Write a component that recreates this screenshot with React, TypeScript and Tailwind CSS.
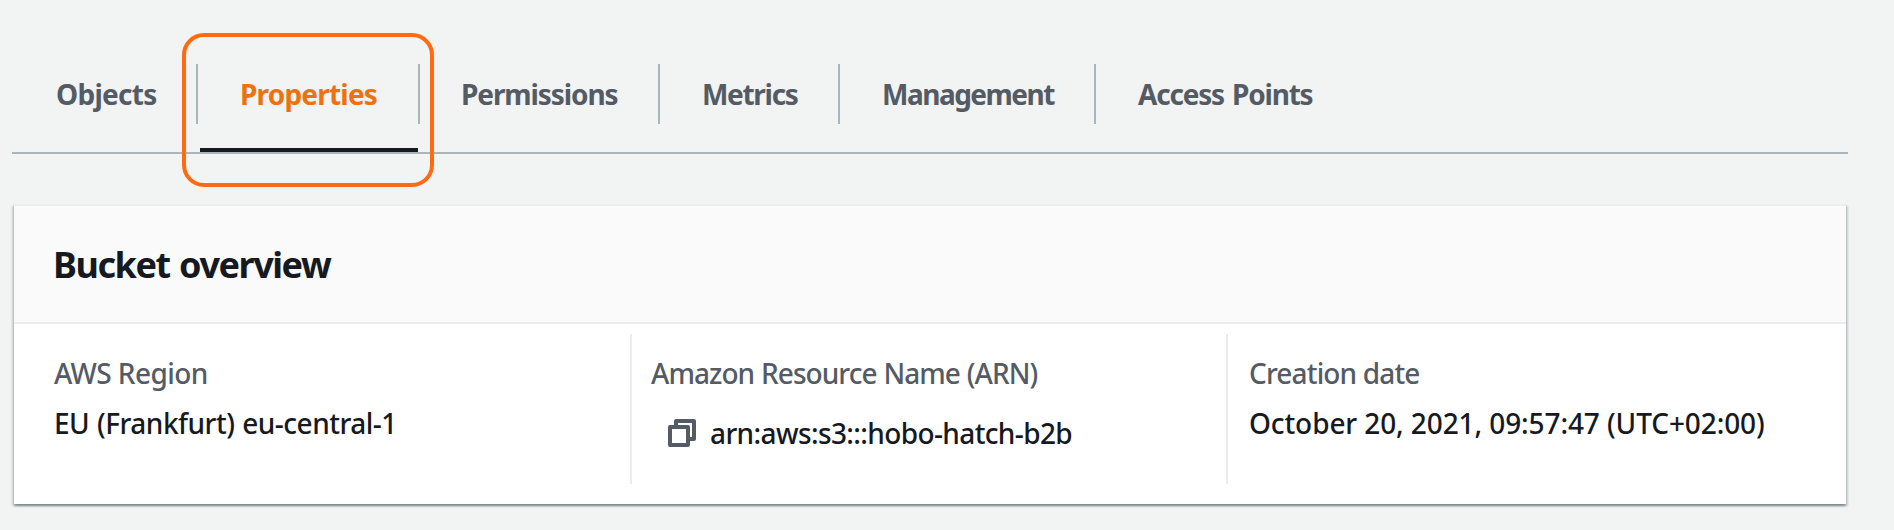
type Tab = { label: string; box: string; text: string; active?: boolean };

const tabs: Tab[] = [
  { label: "Objects", box: "w-[186px]", text: "pl-11 tracking-[-0.7px]" },
  { label: "Properties", box: "w-[222px]", text: "pl-[42px] tracking-[-0.8px]", active: true },
  { label: "Permissions", box: "w-[240px]", text: "pl-[41px] tracking-[-1.1px]" },
  { label: "Metrics", box: "w-[180px]", text: "pl-[42px] tracking-[-1.3px]" },
  { label: "Management", box: "w-[256px]", text: "pl-[42px] tracking-[-1.5px]" },
  { label: "Access Points", box: "w-[260px]", text: "pl-[42px] tracking-[-1.2px] [word-spacing:2px]" },
];

function CopyIcon() {
  return (
    <svg
      className="h-7 w-7 shrink-0"
      viewBox="0 0 28 28"
      fill="none"
      stroke="#545b64"
      strokeWidth="4"
      strokeLinejoin="round"
    >
      <path d="M2 8h18v18H2z" />
      <path d="M8 8V2h18v18h-6" />
    </svg>
  );
}

function TabItem({ tab, last }: { tab: Tab; last: boolean }) {
  return (
    <div className={`flex h-[88px] flex-col ${tab.box}`}>
      <div
        className={`flex h-[60px] items-center border-[#aab7b8] text-[28px] leading-9 font-bold whitespace-nowrap ${
          last ? "" : "border-r-2"
        } ${tab.active ? "text-[#ec7211]" : "text-[#545b64]"} ${tab.text}`}
      >
        {tab.label}
      </div>
      {tab.active && <div className="mx-0.5 mt-auto h-1 bg-[#16191f]" />}
    </div>
  );
}

export default function App() {
  return (
    <div className="h-[530px] w-full overflow-hidden bg-[#f2f3f3] pr-[46px] pl-3 font-['Noto_Sans','Open_Sans',sans-serif]">
      <nav className="relative flex border-b-2 border-[#aab7b8] pt-16">
        {tabs.map((tab, i) => (
          <TabItem key={tab.label} tab={tab} last={i === tabs.length - 1} />
        ))}
        <div className="absolute top-[33px] left-[170px] h-[154px] w-[252px] rounded-[22px] border-4 border-[#ff6a13]" />
      </nav>

      <section className="mx-0.5 mt-[50px] border-t-2 border-[#eaeded] bg-white shadow-[0_2px_2px_0_rgba(0,28,36,0.3),2px_2px_2px_0_rgba(0,28,36,0.15),-2px_2px_2px_0_rgba(0,28,36,0.15)]">
        <header className="flex h-[118px] items-center border-b-2 border-[#eaeded] bg-[#fafafa] pt-0.5 pl-[39px]">
          <h2 className="text-[36px] leading-[44px] font-bold tracking-[-1.45px] text-[#16191f] [word-spacing:1.5px]">
            Bucket overview
          </h2>
        </header>
        <div className="flex h-[180px] pt-2.5 pb-5 text-[28px] leading-10 font-medium whitespace-nowrap text-[#16191f]">
          <div className="w-[616px] pt-[19px] pl-10">
            <div className="tracking-[-0.6px] text-[#545b64]">AWS Region</div>
            <div className="mt-2.5 tracking-[-0.5px] [word-spacing:1px]">EU (Frankfurt) eu-central-1</div>
          </div>
          <div className="w-[596px] border-l-2 border-[#eaeded] pt-[19px] pl-[19px]">
            <div className="tracking-[-0.95px] text-[#545b64] [word-spacing:0.5px]">Amazon Resource Name (ARN)</div>
            <div className="mt-5 flex items-center pl-[17px]">
              <CopyIcon />
              <span className="ml-3.5 tracking-[-0.62px]">arn:aws:s3:::hobo-hatch-b2b</span>
            </div>
          </div>
          <div className="flex-1 border-l-2 border-[#eaeded] pt-[19px] pl-[21px]">
            <div className="tracking-[-0.85px] text-[#545b64]">Creation date</div>
            <div className="mt-2.5 tracking-[-0.1px]">October 20, 2021, 09:57:47 (UTC+02:00)</div>
          </div>
        </div>
      </section>
    </div>
  );
}
